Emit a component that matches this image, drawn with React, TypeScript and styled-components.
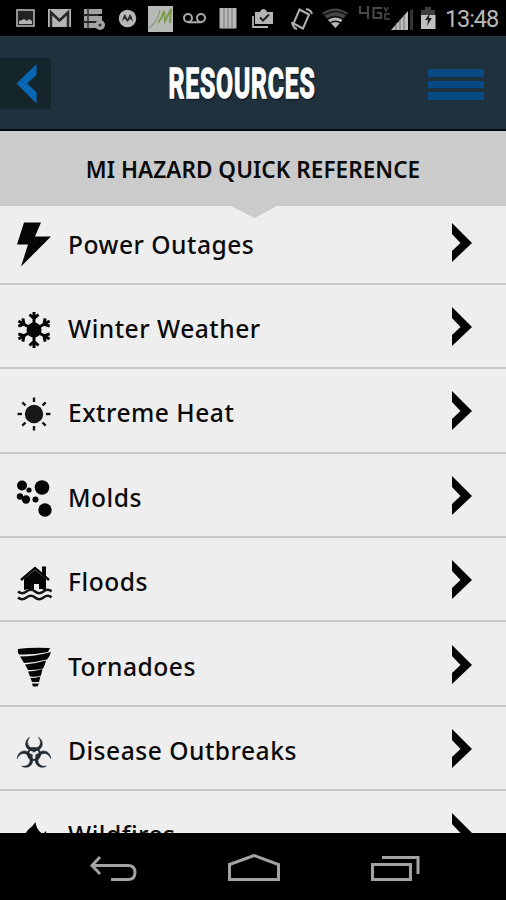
import React from 'react';
import styled, { createGlobalStyle } from 'styled-components';

const Global = createGlobalStyle`
  * { box-sizing: border-box; }
  body { margin: 0; background: #000; font-family: "Open Sans", "Noto Sans", sans-serif; }
`;

const Screen = styled.div`
  width: 506px;
  height: 900px;
  display: flex;
  flex-direction: column;
  overflow: hidden;
  background: #000;
`;

const StatusBar = styled.div`
  flex: none;
  height: 36px;
  display: flex;
  align-items: center;
  background: #000;
`;

const StatusGlyph = styled.svg<{ $gap: number }>`
  flex: none;
  display: block;
  margin-left: ${(p) => p.$gap}px;
`;

const Clock = styled.span`
  margin-left: 8px;
  padding-top: 2px;
  font: 400 23.5px/36px Roboto, sans-serif;
  letter-spacing: -1.1px;
  color: #b9b9b9;
`;

const TopBar = styled.header`
  flex: none;
  height: 95px;
  display: grid;
  grid-template-columns: 51px 1fr 51px;
  align-items: center;
  background: #20313e;
  border-top: 1px solid #2b3335;
  border-bottom: 2px solid #05090d;
`;

const BackButton = styled.button`
  width: 51px;
  height: 51px;
  padding: 0;
  border: 0;
  background: #14252c;
  svg { display: block; }
`;

const Title = styled.h1`
  margin: 0;
  justify-self: center;
  font: 700 43px/50px Roboto, sans-serif;
  letter-spacing: 1.5px;
  white-space: nowrap;
  color: #fff;
  transform: translate(-11px, 0) scaleX(0.574);
  -webkit-text-stroke: 1.5px #fff;
  text-shadow: 2px 2px 2px #071722;
`;

const MenuButton = styled.button`
  justify-self: end;
  width: 56px;
  margin-right: 22px;
  margin-top: 3px;
  padding: 0;
  border: 0;
  background: none;
  display: grid;
  gap: 4px;
`;

const MenuLine = styled.span`
  height: 7.5px;
  background: #094983;
`;

const Section = styled.div`
  position: relative;
  z-index: 1;
  flex: none;
  height: 75px;
  display: flex;
  justify-content: center;
  background: linear-gradient(#c9ccd3 0, #cbcbcb 4px);
`;

const SectionTitle = styled.h2`
  margin: 0;
  font-family: "Noto Sans", "Open Sans", sans-serif;
  font-size: 22.5px;
  line-height: 78px;
  font-weight: 620;
  letter-spacing: 0.05px;
  white-space: nowrap;
  color: #0a0a0a;
`;

const Notch = styled.svg`
  position: absolute;
  left: 231px;
  top: 74.5px;
`;

const List = styled.ul`
  flex: 1;
  min-height: 0;
  margin: -5.5px 0 0;
  padding: 0;
  list-style: none;
  overflow: hidden;
  background: #eee;
`;

const Row = styled.li`
  height: 84.4px;
  padding: 4px 34px 0 16px;
  display: grid;
  grid-template-columns: 52px 1fr 20px;
  align-items: center;
  border-bottom: 2px solid #c9c9c9;
  svg { display: block; }
`;

const HazardIcon = styled.svg`
  margin-top: 5px;
`;

const Label = styled.span`
  font-family: "Noto Sans", "Open Sans", sans-serif;
  font-size: 24.6px;
  line-height: 34px;
  font-weight: 500;
  letter-spacing: 0.5px;
  white-space: nowrap;
  color: #0b0b0b;
  padding-top: 2px;
`;

const Chevron = styled.svg`
  margin-top: -2px;
`;

const NavBar = styled.nav`
  flex: none;
  height: 67px;
  display: grid;
  grid-template-columns: 1fr 1fr 1fr;
  justify-items: center;
  align-items: center;
  padding: 5px 41px 0 42px;
  background: #000;
`;

type StatusItem = { x: number; w: number; art: React.ReactNode };

const G = '#b4b4b4';

const statusItems: StatusItem[] = [
  { x: 16, w: 20, art: <><rect x="17" y="10" width="17" height="16" fill="#222" stroke="#aaa" strokeWidth="1.7" /><path d="M19 24v-3l3-1 2-1 3 2 2-2 3 2v3z" fill={G} /></> },
  { x: 47, w: 25, art: <><rect x="48" y="9" width="23" height="18" fill={G} /><path d="M51 27V12.500l8.500 8 8.500-8V27" fill="none" stroke="#272727" strokeWidth="2.500" /></> },
  { x: 82, w: 24, art: <><g fill="#a2a2a2"><rect x="84" y="9" width="18" height="5" /><rect x="84" y="16" width="18" height="5" /><rect x="84" y="23" width="14" height="5" /><circle cx="100" cy="25" r="5" /></g><path d="M88 8v21M83 15h16M83 22h13" stroke="#333" strokeWidth="1.500" /><circle cx="100" cy="25" r="1.500" fill="#333" /></> },
  { x: 118, w: 19, art: <><circle cx="127.500" cy="18.500" r="8.700" fill="#b9b9b9" /><path d="M122 22q1-6 3-8l2.500 5 2.500-5q2 2 3 8-2-3-3-3l-2.500 3-2.500-3q-2 0-3 3z" fill="#333" /></> },
  { x: 148, w: 26, art: <><rect x="148" y="6" width="25" height="26" fill="#b7bbb6" /><path d="M149 28q8-5 11-18" fill="none" stroke="#8b9b83" strokeWidth="1.200" /><path d="M158 23q4-5 6-12l1 10 6-12-1 14" fill="none" stroke="#7d9b4f" strokeWidth="2" /></> },
  { x: 182, w: 25, art: <g fill="none" stroke="#aaa" strokeWidth="2"><circle cx="188" cy="18" r="4" /><circle cx="201" cy="18" r="4" /><path d="M188 22.300h13" /></g> },
  { x: 219, w: 18, art: <><rect x="219.500" y="8" width="17" height="20.500" fill="#b8b8b8" /><path d="M224 8v21M228 8v21M232 8v21" stroke="#777" strokeWidth="1" /></> },
  { x: 251, w: 23, art: <><path d="M255 12h5q1-3 3.500-3t3.500 3h6v12h-18z" fill={G} /><path d="M253 16v11h15" fill="none" stroke={G} strokeWidth="1.800" /><path d="M260 17.500l3 3 6-6" fill="none" stroke="#222" strokeWidth="2" /></> },
  { x: 291, w: 22, art: <g fill="none" stroke="#b0b0b0" strokeWidth="2"><path d="M299.500 9.500l9.500 5-6 14-9.500-5z" /><path d="M306 9q5 1 6 5M292 22q1 6 5 7" /></g> },
  { x: 322, w: 27, art: <><path d="M322 13q13-9 26 0L335.500 28z" fill="#454545" /><path d="M328 20q7.500-5 14.500 0L335.500 28z" fill="#b8b8b8" /><path d="M323.500 15.500q12-8 23.500 0M326.500 19.500q9-6 17.500 0M330 23q5.500-3.500 11 0" fill="none" stroke="#111" strokeWidth="1.300" /></> },
  { x: 358, w: 33, art: <g fill="none" stroke="#484848" strokeWidth="2.200"><path d="M360 6v7h9M368 6v13M382 8h-8.500v10H381v-5h-4" /><path d="M384 7l2 4 2-4M390 14h-5v5h5" strokeWidth="1.500" /></g> },
  { x: 391, w: 24, art: <><path d="M391 30l17-19v19z" fill="#bebebe" /><path d="M396 23v7M400 19v11M404 15v15" stroke="#666" strokeWidth="1" /><path d="M410 9.500h3.200V30H410z" fill="#333" /></> },
  { x: 420, w: 17, art: <><path d="M421 10h4V7h6v3h4v6h-14z" fill="#3d3d3d" /><rect x="421" y="15" width="14.500" height="14" fill="#c0c0c0" /><path d="M430 13l-5 7h3l-1 6 5-8h-3z" fill="#222" /></> },
];

const flake = [0, 60, 120, 180, 240, 300];
const rays = [0, 45, 90, 135, 180, 225, 270, 315];

const hazards: { name: string; icon: React.ReactNode }[] = [
  { name: 'Power Outages', icon: <path d="M8-22h17l-6 14h16L5 22l7-22H1z" transform="translate(0 17.500)" /> },
  {
    name: 'Winter Weather',
    icon: <g transform="translate(18 18)" fill="none" stroke="#050505" strokeWidth="3">
      <circle r="7.500" fill="#050505" stroke="none" />
      {flake.map((a) => <path key={a} d="M0 0V-18M-4.500-15.500L0-11.500L4.500-15.500" transform={`rotate(${a})`} />)}
    </g>,
  },
  {
    name: 'Extreme Heat',
    icon: <g transform="translate(18 18)">
      <circle r="9.200" fill="#171717" />
      {rays.map((a) => <path key={a} d="M0-12V-16.500" stroke="#111" strokeWidth="2.400" transform={`rotate(${a})`} />)}
    </g>,
  },
  {
    name: 'Molds',
    icon: <g transform="translate(0 -1)"><circle cx="6" cy="6.500" r="5" /><circle cx="13" cy="11" r="2.600" /><circle cx="26" cy="8.500" r="7.300" /><circle cx="4" cy="17.500" r="3.200" /><circle cx="10" cy="20.500" r="4.200" /><circle cx="19.500" cy="20.500" r="3" /><circle cx="29" cy="31" r="6.700" /></g>,
  },
  {
    name: 'Floods',
    icon: <>
      <path d="M8 14L19 5l11 9v12l-4-2h-3v-5h-5v5h-5l-5 1z" />
      <path d="M5 15L19 3l14 12" fill="none" stroke="#050505" strokeWidth="2.400" />
      <path d="M26 1.500h4V12l-4-3z" />
      {[26.5, 32.5].map((y) => <path key={y} d={`M2 ${y}q4 3.500 8.500 0t8.500 0t8.500 0t8 0`} fill="none" stroke="#151515" strokeWidth="2.500" />)}
    </>,
  },
  {
    name: 'Tornadoes',
    icon: <path transform="translate(0 -1)" d="M2 1Q15-1 34 0L32 4Q17 7 3 6.500Q1 4 2 1zM4 8.500Q18 8.500 35 4Q34 8 31 11.500Q19 14.500 8 15zM9 16.500Q20 15.500 30 12.500Q29 17 27 20.500Q18 22.500 12 22zM12 23.500Q20 23 26.500 21L25 27.500Q20 29.500 14 28.500zM14.500 30Q20 30 24.500 28.500L23 34H16zM16 35.500H23L21.500 38.500H17z" />,
  },
  {
    name: 'Disease Outbreaks',
    icon: <g transform="translate(18 20) scale(0.96)" fill="none" stroke="#27313a">
      <circle r="6.300" strokeWidth="2" />
      {[0, 120, 240].map((a) => (
        <g key={a} transform={`rotate(${a})`}>
          <path d="M-4.500-17.500C-12-13-9-3 0-3S12-13 4.500-17.500C9-12 6-6 0-6S-9-12-4.500-17.500z" fill="#202a32" strokeWidth="0.500" />
          <path d="M0-5V-1" strokeWidth="2.500" />
        </g>
      ))}
      <circle r="2" fill="#eee" stroke="none" />
    </g>,
  },
  { name: 'Wildfires', icon: <path d="M19.500 4Q17 8 13 11Q9 14 8 22Q8 34 19 36Q31 34 31 22L30 13L27 16Q20 12 19.500 4z" /> },
];

function StatusIcons() {
  return (
    <>
      {statusItems.map((s, i) => {
        const prev = statusItems[i - 1];
        return (
          <StatusGlyph key={s.x} $gap={s.x - (prev ? prev.x + prev.w : 0)} width={s.w} height={36} viewBox={`${s.x} 0 ${s.w} 36`}>
            {s.art}
          </StatusGlyph>
        );
      })}
    </>
  );
}

export default function App() {
  return (
    <>
      <Global />
      <Screen>
        <StatusBar>
          <StatusIcons />
          <Clock>13:48</Clock>
        </StatusBar>
        <TopBar>
          <BackButton aria-label="Back">
            <svg width="51" height="51"><path d="M36.500 6v11L27 25.500 36.500 34v11.500L16.500 25.500z" fill="#0966b3" /></svg>
          </BackButton>
          <Title>RESOURCES</Title>
          <MenuButton aria-label="Menu"><MenuLine /><MenuLine /><MenuLine /></MenuButton>
        </TopBar>
        <Section>
          <SectionTitle>MI HAZARD QUICK REFERENCE</SectionTitle>
          <Notch width="46" height="13"><path d="M0 0h46L23.500 12z" fill="#cbcbcb" /></Notch>
        </Section>
        <List>
          {hazards.map((h) => (
            <Row key={h.name}>
              <HazardIcon width="38" height="38" viewBox="0 0 38 38" overflow="visible" fill="#050505">{h.icon}</HazardIcon>
              <Label>{h.name}</Label>
              <Chevron width="20" height="40" viewBox="0 0 20 40"><path d="M0 0L20 20 0 39V28L8.500 20 0 11z" fill="#050505" /></Chevron>
            </Row>
          ))}
        </List>
        <NavBar>
          <svg width="48" height="30" fill="none" stroke="#a3a3a3" strokeWidth="3"><path d="M11 3L3 11.500 11 20M3 11.500H39q7 0 7 7t-7 7H22" /></svg>
          <svg width="54" height="30" fill="none" stroke="#a3a3a3" strokeWidth="3"><path d="M2.500 10.500L27 1.500l24.500 9v15h-49z" /></svg>
          <svg width="50" height="30" fill="none" stroke="#a3a3a3" strokeWidth="3"><path d="M2.500 10.500h38v15h-38zM12 3.500h36V20" /></svg>
        </NavBar>
      </Screen>
    </>
  );
}
